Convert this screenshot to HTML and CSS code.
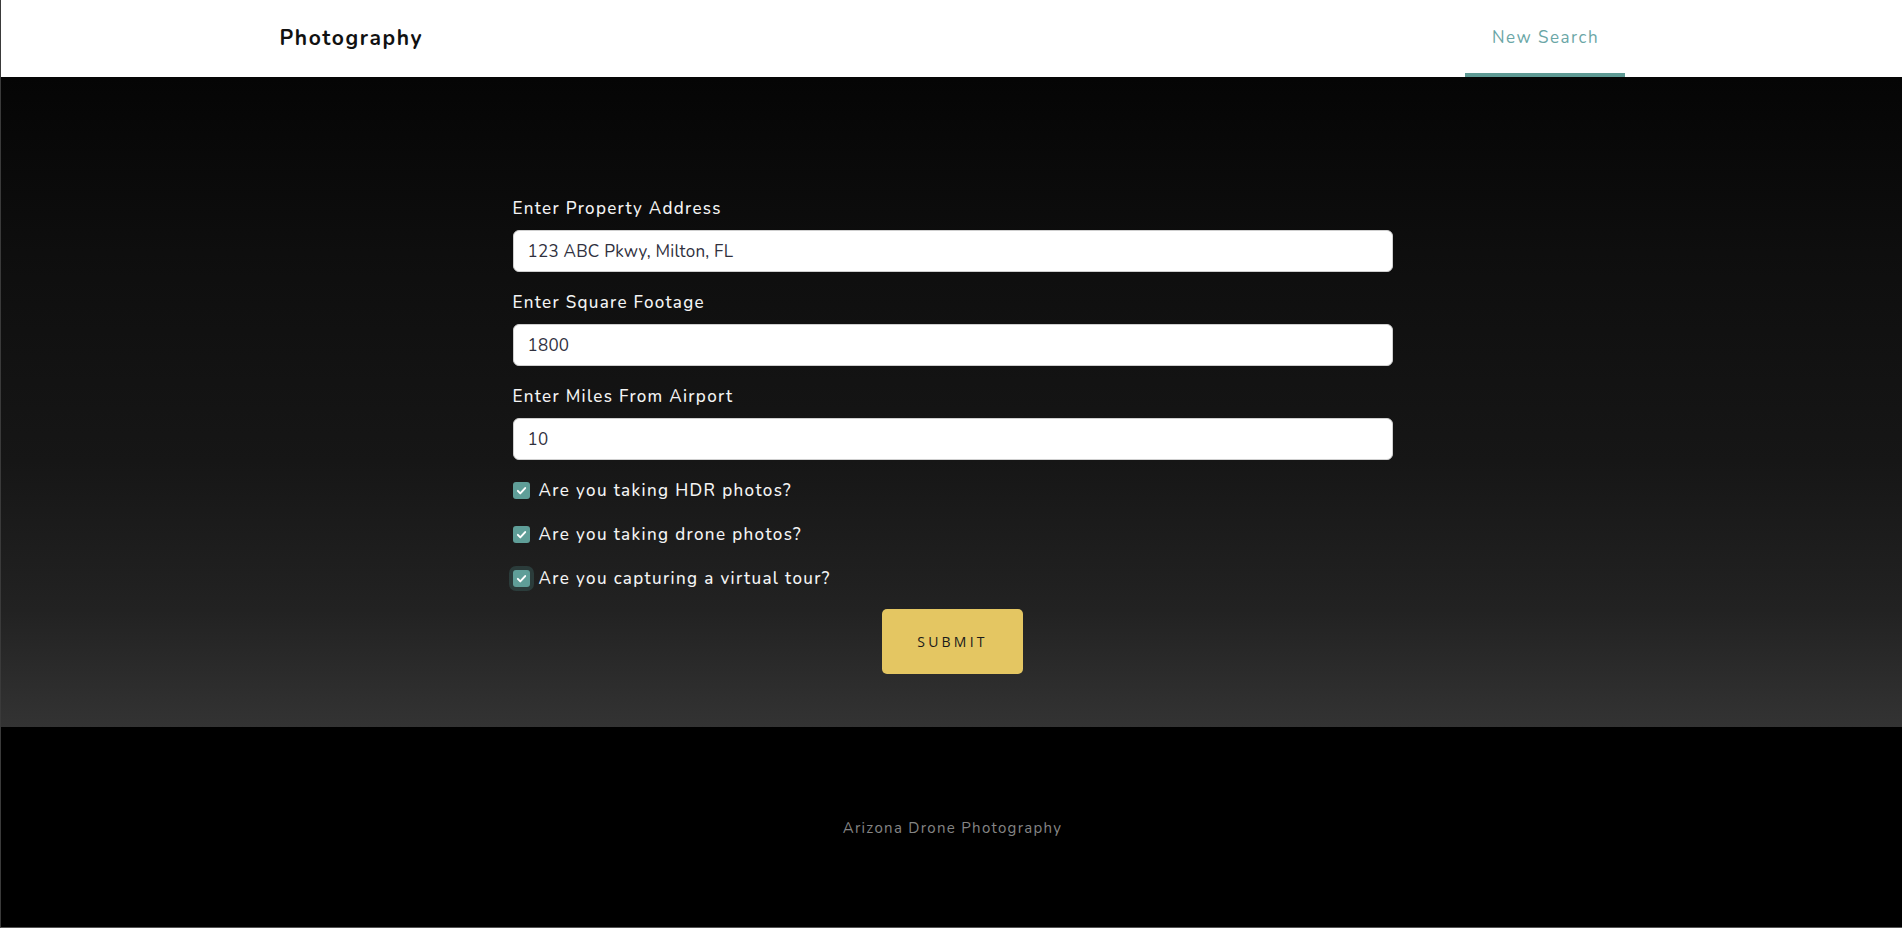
FILE: index.html
```html
<!DOCTYPE html>
<html lang="en">
<head>
<meta charset="utf-8">
<title>Photography</title>
<link rel="stylesheet" href="styles.css">
</head>
<body>
<div class="page">
  <header class="topbar">
    <div class="topbar-inner">
      <div class="brand">Photography</div>
      <nav class="nav">
        <a class="nav-item active" href="#">New Search</a>
      </nav>
    </div>
  </header>
  <main class="hero">
    <form class="form">
      <label class="field-label">Enter Property Address</label>
      <input class="field-input" type="text" value="123 ABC Pkwy, Milton, FL">
      <label class="field-label">Enter Square Footage</label>
      <input class="field-input" type="text" value="1800">
      <label class="field-label">Enter Miles From Airport</label>
      <input class="field-input" type="text" value="10">
      <div class="checks">
        <label class="check-row">
          <span class="box"><svg viewBox="0 0 16 16" width="13" height="13"><path d="M3.5 8.5l3 3 6-6.5" fill="none" stroke="#fff" stroke-width="2.4" stroke-linecap="round" stroke-linejoin="round"/></svg></span>
          <span class="check-text">Are you taking HDR photos?</span>
        </label>
        <label class="check-row">
          <span class="box"><svg viewBox="0 0 16 16" width="13" height="13"><path d="M3.5 8.5l3 3 6-6.5" fill="none" stroke="#fff" stroke-width="2.4" stroke-linecap="round" stroke-linejoin="round"/></svg></span>
          <span class="check-text">Are you taking drone photos?</span>
        </label>
        <label class="check-row">
          <span class="box focused"><svg viewBox="0 0 16 16" width="13" height="13"><path d="M3.5 8.5l3 3 6-6.5" fill="none" stroke="#fff" stroke-width="2.4" stroke-linecap="round" stroke-linejoin="round"/></svg></span>
          <span class="check-text">Are you capturing a virtual tour?</span>
        </label>
      </div>
      <div class="actions">
        <button class="submit" type="button">SUBMIT</button>
      </div>
    </form>
  </main>
  <footer class="footer">
    <p class="footer-text">Arizona Drone Photography</p>
  </footer>
</div>
</body>
</html>
```
FILE: styles.css
```css
* { box-sizing: border-box; }
html, body { margin: 0; padding: 0; }
body {
  font-family: "Nunito", "Lato", "Open Sans", sans-serif;
  background: #000;
}
.page {
  border-left: 1px solid #3a3a3a;
  border-bottom: 1px solid #555;
  min-height: 928px;
  display: flex;
  flex-direction: column;
}
.topbar {
  background: #fff;
  height: 77px;
}
.topbar-inner {
  width: 1346px;
  margin: 0 auto;
  height: 100%;
  display: flex;
  align-items: stretch;
  justify-content: space-between;
}
.brand {
  display: flex;
  align-items: center;
  font-weight: 700;
  font-size: 21px;
  letter-spacing: 1.6px;
  color: #111;
  padding-left: 1px;
  padding-bottom: 2px;
}
.nav { display: flex; align-items: stretch; }
.nav-item {
  width: 160px;
  display: flex;
  align-items: center;
  justify-content: center;
  font-size: 17px;
  letter-spacing: 1.5px;
  color: #6aa6a6;
  text-decoration: none;
  border-bottom: 4px solid #5e9a94;
  padding-top: 2px;
  padding-left: 2px;
}
.hero {
  background: linear-gradient(to bottom, #050505 0%, #0e0e0e 27%, #161616 59%, #222 82%, #333 100%);
  padding: 120px 0 53px 2px;
}
.form {
  width: 880px;
  margin: 0 auto;
  display: flex;
  flex-direction: column;
}
.field-label {
  color: #f4f4f4;
  font-size: 17px;
  font-weight: 500;
  line-height: 22px;
  letter-spacing: 1.3px;
  padding-top: 1px;
  margin-bottom: 10px;
}
.field-input {
  height: 42px;
  border: 1px solid #cfcfcf;
  border-radius: 6px;
  background: #fff;
  padding: 0 14px;
  font-family: inherit;
  font-size: 17px;
  letter-spacing: 0.25px;
  color: #30303e;
  margin-bottom: 19px;
}
.checks {
  display: flex;
  flex-direction: column;
  gap: 22px;
}
.check-row {
  display: flex;
  align-items: center;
  gap: 9px;
  height: 22px;
  color: #f4f4f4;
  font-size: 17px;
  font-weight: 500;
  letter-spacing: 1.36px;
}
.box {
  width: 17px;
  height: 17px;
  border-radius: 3px;
  background: #5f9e98;
  display: flex;
  align-items: center;
  justify-content: center;
}
.box.focused { box-shadow: 0 0 0 4px #2b3c3b; }
.actions {
  display: flex;
  justify-content: center;
  margin-top: 20px;
}
.submit {
  width: 141px;
  height: 65px;
  background: #e4c662;
  border: none;
  border-radius: 5px;
  font-family: "Open Sans", sans-serif;
  font-size: 14px;
  letter-spacing: 3.2px;
  color: #1a1a1a;
  padding-left: 6px;
  padding-top: 1px;
}
.footer {
  flex: 1;
  display: flex;
  align-items: center;
  justify-content: center;
  background: #000;
}
.footer-text {
  margin: 0;
  color: #858585;
  font-size: 15px;
  letter-spacing: 1.3px;
  padding-top: 2px;
  padding-left: 2px;
}
```
